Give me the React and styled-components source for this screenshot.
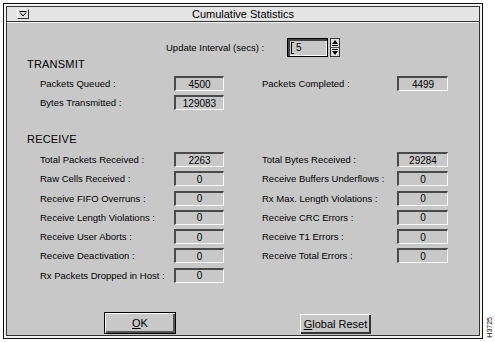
import React from "react";
import styled, { createGlobalStyle } from "styled-components";

const GlobalStyle = createGlobalStyle`
  html, body {
    margin: 0;
    padding: 0;
    background: #ffffff;
  }
  body {
    font-family: "Liberation Sans", Arial, sans-serif;
    color: #000;
  }
`;

const transmitRows = [
  ["Packets Queued :", "4500", "Packets Completed :", "4499"],
  ["Bytes Transmitted :", "129083"],
];

const receiveRows = [
  ["Total Packets Received :", "2263", "Total Bytes Received :", "29284"],
  ["Raw Cells Received :", "0", "Receive Buffers Underflows :", "0"],
  ["Receive FIFO Overruns :", "0", "Rx Max. Length Violations :", "0"],
  ["Receive Length Violations :", "0", "Receive CRC Errors :", "0"],
  ["Receive User Aborts :", "0", "Receive T1 Errors :", "0"],
  ["Receive Deactivation :", "0", "Receive Total Errors :", "0"],
  ["Rx Packets Dropped in Host :", "0"],
];

function StatRows({ rows }) {
  return rows.map((r, i) => (
    <React.Fragment key={i}>
      <Label>{r[0]}</Label>
      <Field>{r[1]}</Field>
      <span />
      {r[2] ? <Label>{r[2]}</Label> : <span />}
      {r[3] ? <Field>{r[3]}</Field> : <span />}
    </React.Fragment>
  ));
}

export default function App() {
  return (
    <Page>
      <GlobalStyle />
      <Window>
        <Inner>
          <TitleBar>
            <MenuButton>
              <svg width="8" height="6" viewBox="0 0 8 6">
                <path d="M0.5 0.5 H7.5 M1 1.5 L4 5 L7 1.5" fill="none" stroke="#000" strokeWidth="1" />
              </svg>
            </MenuButton>
            <Title>Cumulative Statistics</Title>
            <span />
          </TitleBar>
          <Body>
            <UpdateRow>
              <Label $width="121px">Update Interval (secs) :</Label>
              <SpinField>
                <Caret />5
              </SpinField>
              <Arrows>
                <svg width="10" height="19" viewBox="0 0 10 19">
                  <rect x="0.5" y="0.5" width="9" height="18" fill="#e2e2e2" stroke="#333" />
                  <path d="M5 2 L8 6 H2 Z" fill="#000" />
                  <path d="M2 7.5 H8" stroke="#000" />
                  <path d="M0.5 9.5 H9.5" stroke="#555" />
                  <path d="M2 11.5 H8" stroke="#000" />
                  <path d="M2 13 H8 L5 17 Z" fill="#000" />
                </svg>
              </Arrows>
            </UpdateRow>

            <Heading $top="1px">TRANSMIT</Heading>
            <StatGrid $top="5px" $gap="4px">
              <StatRows rows={transmitRows} />
            </StatGrid>

            <Heading $top="23px">RECEIVE</Heading>
            <StatGrid $top="6px" $gap="4.25px">
              <StatRows rows={receiveRows} />
            </StatGrid>

            <ButtonRow>
              <DefaultButton>
                <u>O</u>K
              </DefaultButton>
              <PushButton>
                <u>G</u>lobal Reset
              </PushButton>
            </ButtonRow>
          </Body>
        </Inner>
      </Window>
      <Side>
        <Caption>H3725</Caption>
      </Side>
    </Page>
  );
}

const Page = styled.div`
  display: flex;
  width: 495px;
  height: 342px;
  overflow: hidden;
  background: #fff;
`;

const Window = styled.div`
  margin: 3px 0 0 3px;
  width: 480px;
  height: 336px;
  box-sizing: border-box;
  border: 1px solid #111;
  padding: 2px;
  background: #f4f4f4;
`;

const Inner = styled.div`
  height: 100%;
  box-sizing: border-box;
  border: 1px solid #333;
  display: flex;
  flex-direction: column;
`;

const TitleBar = styled.div`
  height: 14px;
  display: grid;
  grid-template-columns: 1fr auto 1fr;
  align-items: center;
  background: #e4e4e4;
  border-bottom: 1px solid #333;
  margin-bottom: 1px;
`;

const MenuButton = styled.div`
  justify-self: start;
  margin-left: 10px;
  width: 12px;
  height: 10px;
  box-sizing: border-box;
  border-top: 1px solid #fff;
  border-left: 1px solid #fff;
  border-right: 1px solid #333;
  border-bottom: 1px solid #333;
  display: flex;
  align-items: center;
  justify-content: center;
`;

const Title = styled.div`
  font-size: 11px;
  line-height: 14px;
`;

const Body = styled.div`
  flex: 1;
  display: flex;
  flex-direction: column;
  background: #c8c8c8;
  padding: 15px 0 1px 0;
`;

const UpdateRow = styled.div`
  display: flex;
  align-items: center;
  height: 19px;
  margin-left: 159px;
`;

const Label = styled.div`
  width: ${(p) => p.$width || "auto"};
  font-size: 9.5px;
  white-space: nowrap;
  display: flex;
  align-items: center;
`;

const SpinField = styled.div`
  width: 41px;
  height: 19px;
  box-sizing: border-box;
  border: 1px solid #000;
  box-shadow: inset 2px 2px 0 #444, inset -1px -1px 0 #fff;
  display: flex;
  align-items: center;
  padding-left: 3px;
  font-size: 10px;
`;

const Caret = styled.span`
  width: 2px;
  height: 10px;
  border: 1px solid #000;
  border-right: none;
  margin-right: 2px;
`;

const Arrows = styled.div`
  margin-left: 2px;
  display: flex;
`;

const Heading = styled.div`
  margin: ${(p) => p.$top} 0 0 20px;
  font-size: 11px;
  line-height: 13px;
  letter-spacing: 0.2px;
`;

const StatGrid = styled.div`
  margin: ${(p) => p.$top} 0 0 33px;
  display: grid;
  grid-template-columns: 134px 50px 38px 135px 51px;
  grid-auto-rows: 15px;
  row-gap: ${(p) => p.$gap};
`;

const Field = styled.div`
  box-sizing: border-box;
  border-top: 2px solid #4a4a4a;
  border-left: 2px solid #4a4a4a;
  border-right: 1px solid #fafafa;
  border-bottom: 1px solid #fafafa;
  display: flex;
  align-items: center;
  justify-content: center;
  font-size: 10px;
`;

const ButtonRow = styled.div`
  margin-top: auto;
  display: flex;
  align-items: flex-end;
  gap: 124px;
  padding-left: 97px;
`;

const DefaultButton = styled.div`
  width: 72px;
  height: 22px;
  box-sizing: border-box;
  border: 1px solid #000;
  box-shadow: inset 1px 1px 0 #fff, inset -2px -2px 0 #555;
  display: flex;
  align-items: center;
  justify-content: center;
  font-size: 11px;
`;

const PushButton = styled.div`
  width: 71px;
  height: 20px;
  box-sizing: border-box;
  box-shadow: inset 1px 1px 0 #fff, inset -2px -2px 0 #333;
  display: flex;
  align-items: center;
  justify-content: center;
  font-size: 11px;
`;

const Side = styled.div`
  flex: 1;
  display: flex;
  align-items: flex-end;
  padding: 0 0 4px 3px;
`;

const Caption = styled.div`
  writing-mode: vertical-rl;
  transform: rotate(180deg);
  font-size: 7px;
  line-height: 7px;
`;
